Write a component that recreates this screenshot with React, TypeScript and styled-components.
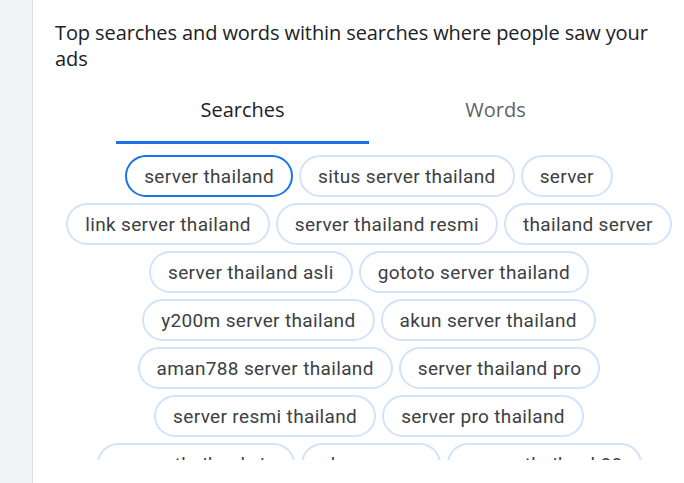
import styled, { createGlobalStyle } from 'styled-components';

const GlobalStyle = createGlobalStyle`
   html, body {
      margin: 0;
      padding: 0;
      background: #ffffff;
   }
   body {
      font-family: Roboto, 'Noto Sans', sans-serif;
      overflow: hidden;
   }
`;

const Page = styled.div`
   display: flex;
   width: 684px;
   height: 483px;
   overflow: hidden;
`;

const SideRail = styled.div`
   flex: 0 0 32px;
   background: #f1f3f4;
   border-right: 1px solid #dadce0;
   box-shadow: 1px 0 2px rgba(60, 64, 67, 0.2);
`;

const Card = styled.div`
   flex: 0 0 650px;
   padding: 20px 0 0 22px;
   box-sizing: border-box;
   background: #ffffff;
`;

const Content = styled.div`
   width: 628px;
   display: flex;
   flex-direction: column;
   align-items: center;
`;

const Title = styled.h2`
   align-self: stretch;
   margin: 0;
   font-family: 'Open Sans', sans-serif;
   font-size: 20px;
   font-weight: 500;
   letter-spacing: -0.1px;
   line-height: 26px;
   color: #202124;
`;

const TabBar = styled.div`
   display: flex;
   width: 506px;
   margin-top: 9px;
`;

const Tab = styled.div<{ $active?: boolean }>`
   flex: 1;
   height: 63px;
   display: flex;
   align-items: center;
   justify-content: center;
   padding-bottom: 4px;
   box-sizing: border-box;
   font-family: 'Open Sans', sans-serif;
   font-size: 20px;
   font-weight: 500;
   color: ${(p) => (p.$active ? '#202124' : '#5f6368')};
   border-bottom: 3px solid ${(p) => (p.$active ? '#1a73e8' : 'transparent')};
`;

const ChipList = styled.div`
   display: flex;
   flex-wrap: wrap;
   justify-content: center;
   align-content: flex-start;
   gap: 6px 6px;
   width: 628px;
   height: 306px;
   margin-top: 10px;
   padding-top: 1px;
   box-sizing: border-box;
   overflow: hidden;
`;

const Chip = styled.button<{ $selected?: boolean }>`
   height: 42px;
   padding: 0 17px;
   border-radius: 21px;
   border: 2px solid ${(p) => (p.$selected ? '#1a73e8' : '#d2e3fc')};
   background: #ffffff;
   font-family: Roboto, sans-serif;
   font-size: 19px;
   letter-spacing: 0.35px;
   color: #3c4043;
   white-space: nowrap;
   cursor: pointer;
`;

const searches = [
   'server thailand',
   'situs server thailand',
   'server',
   'link server thailand',
   'server thailand resmi',
   'thailand server',
   'server thailand asli',
   'gototo server thailand',
   'y200m server thailand',
   'akun server thailand',
   'aman788 server thailand',
   'server thailand pro',
   'server resmi thailand',
   'server pro thailand',
   'server thailand vip',
   'akun server',
   'server thailand 88',
];

const App = () => {
   return (
      <Page>
         <GlobalStyle />
         <SideRail />
         <Card>
            <Content>
               <Title>Top searches and words within searches where people saw your ads</Title>
               <TabBar>
                  <Tab $active>Searches</Tab>
                  <Tab>Words</Tab>
               </TabBar>
               <ChipList>
                  {searches.map((s, i) => (
                     <Chip key={s} $selected={i === 0}>
                        {s}
                     </Chip>
                  ))}
               </ChipList>
            </Content>
         </Card>
      </Page>
   );
};

export default App;
